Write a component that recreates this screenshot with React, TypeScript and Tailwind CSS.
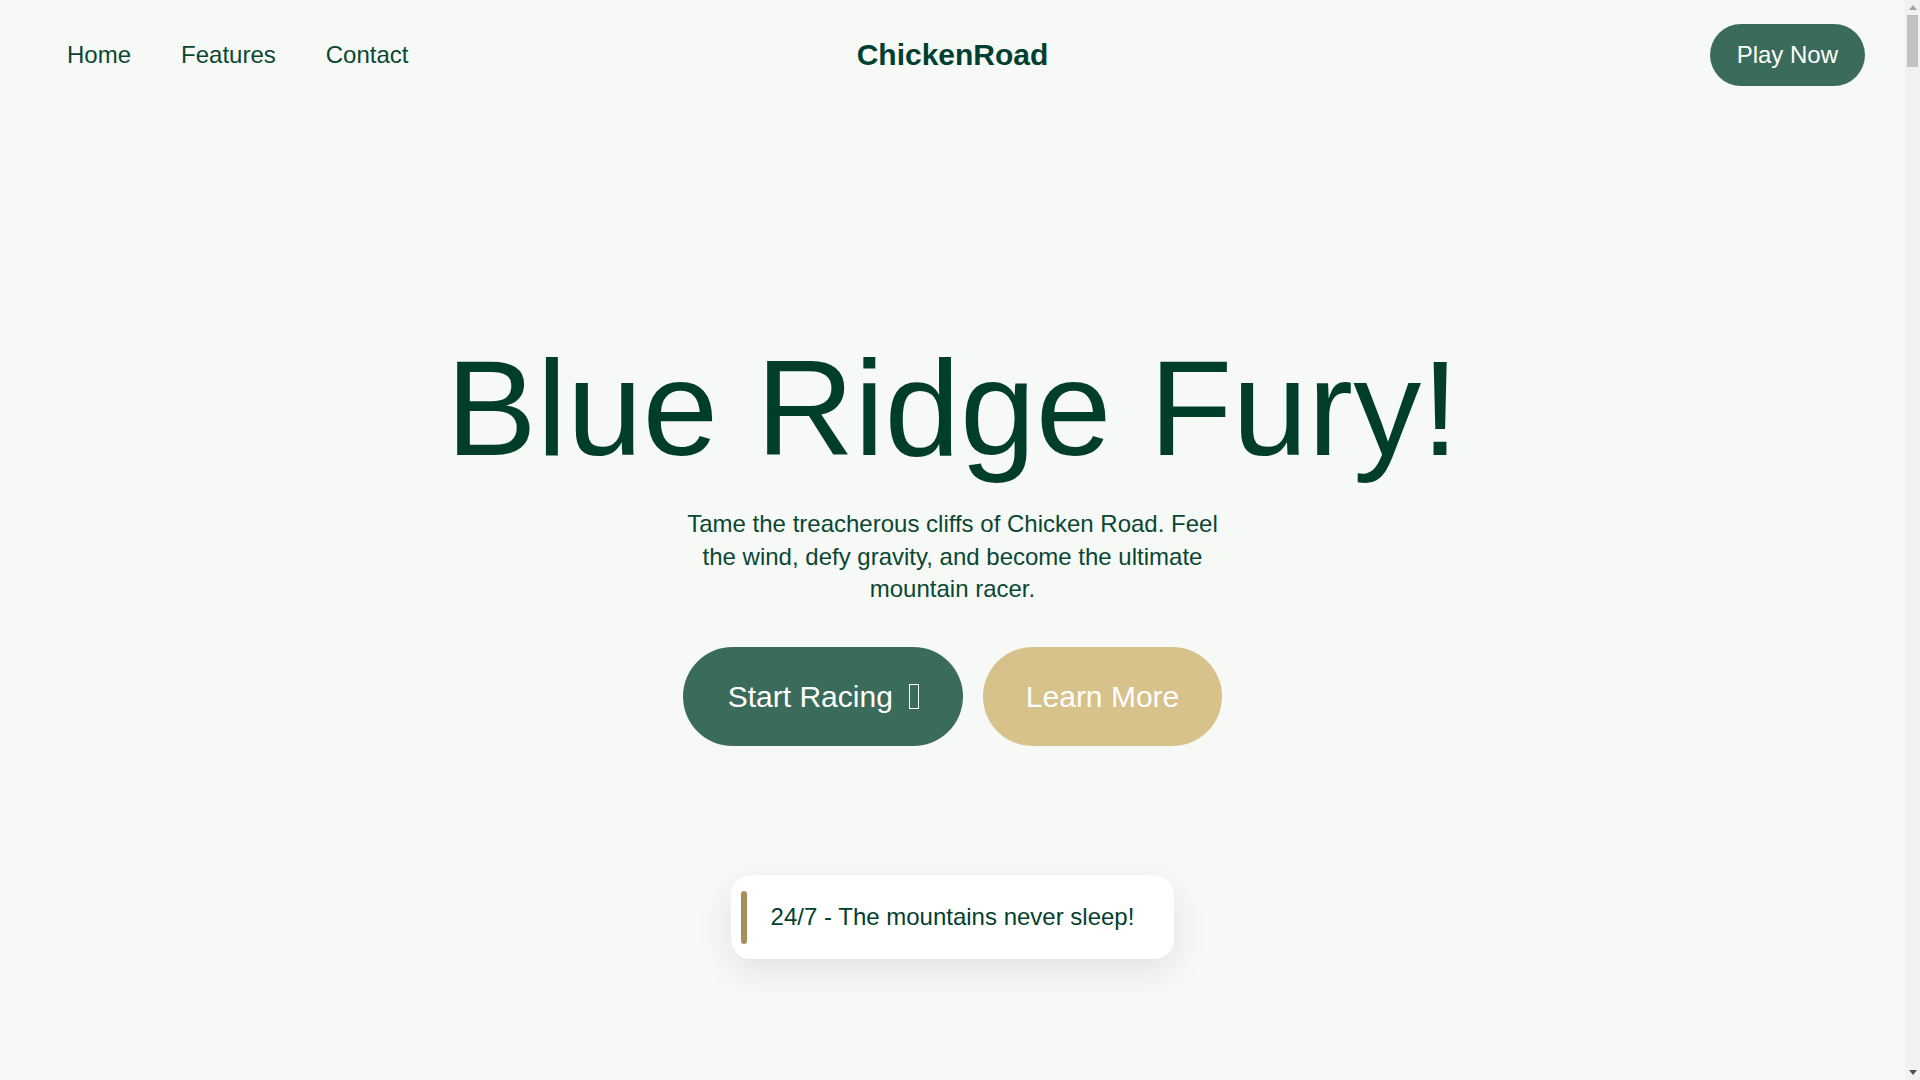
import React from "react"

const navLinks = ["Home", "Features", "Contact"]

function Header() {
    return (
        <header className="grid grid-cols-[1fr_auto_1fr] items-center h-[110px] px-[40px]">
            <nav className="flex items-center gap-[50px] ml-[27px]">
                {navLinks.map((l) => (
                    <a key={l} href="#" className="text-[24px] leading-[28px] text-[#0a4733]">
                        {l}
                    </a>
                ))}
            </nav>
            <div className="text-[30px] font-bold text-[#004030] leading-none">ChickenRoad</div>
            <div className="flex justify-end">
                <button className="h-[62px] px-[27px] rounded-full bg-[#3b6b5a] text-white text-[24px] leading-none">
                    Play Now
                </button>
            </div>
        </header>
    )
}

function Hero() {
    return (
        <section className="flex flex-col items-center text-center pt-[217px] pb-[120px]">
            <h1 className="text-[136px] leading-[1.2] text-[#003d2b] font-normal">Blue Ridge Fury!</h1>
            <p className="mt-[18px] max-w-[550px] text-[24px] leading-[32.5px] text-[#0a4733]">
                Tame the treacherous cliffs of Chicken Road. Feel the wind, defy gravity, and become the ultimate mountain racer.
            </p>

            {/* CTA buttons */}
            <div className="flex items-center gap-[20px] mt-[41px]">
                <button className="h-[99px] pl-[45px] pr-[44px] rounded-full bg-[#3b6b5a] text-white flex items-center text-[30px]">
                    <span>Start Racing</span>
                    {/* missing icon-font glyph renders as an empty box */}
                    <span className="inline-block w-[10px] h-[25px] border-[1.5px] border-white ml-[16px] mt-[1px]" />
                </button>
                <button className="h-[99px] px-[43px] rounded-full bg-[#d6c28a] text-white text-[30px]">
                    Learn More
                </button>
            </div>

            {/* Availability card */}
            <div className="relative mt-[129px] h-[84px] px-[40px] flex items-center bg-white rounded-[20px] shadow-[0_12px_36px_rgba(0,0,0,0.09)]">
                <span className="absolute left-[10px] top-[16px] bottom-[15px] w-[6px] rounded-full bg-[#a68f5b]" />
                <span className="text-[24px] text-[#033f2e]">24/7 - The mountains never sleep!</span>
            </div>
        </section>
    )
}

const features = [
    { title: "Cliffside Tracks", text: "Race along narrow ridges where one wrong step sends you tumbling." },
    { title: "Wind Boosts", text: "Catch the mountain gusts and soar over the gaps in the road." },
    { title: "Daily Climbs", text: "New routes every day to test your nerve and timing." },
]

function Scrollbar() {
    return (
        <aside className="sticky top-0 h-screen w-[15px] shrink-0 bg-[#f1f1f1] flex flex-col">
            <div className="h-[15px] flex items-center justify-center">
                <svg width="8" height="5" viewBox="0 0 8 5"><path d="M4 0L8 5H0Z" fill="#a3a3a3" /></svg>
            </div>
            <div className="mx-[2px] h-[52px] bg-[#c1c1c1]" />
            <div className="flex-1" />
            <div className="h-[15px] flex items-center justify-center">
                <svg width="8" height="5" viewBox="0 0 8 5"><path d="M0 0H8L4 5Z" fill="#505050" /></svg>
            </div>
        </aside>
    )
}

export default function App() {
    return (
        <div className="flex bg-[#f7f9f7] font-['Liberation_Sans',Arial,sans-serif] text-[#003d2b]">
            <main className="flex-1 min-w-0">
                <Header />
                <Hero />

                {/* Below the fold */}
                <section id="features" className="px-[40px] py-[120px] min-h-[10000px]">
                    <h2 className="text-[48px] text-center mb-[60px]">Features</h2>
                    <div className="grid grid-cols-3 gap-[32px] max-w-[1200px] mx-auto">
                        {features.map((f) => (
                            <div key={f.title} className="bg-white rounded-[20px] p-[32px] shadow-[0_12px_36px_rgba(0,0,0,0.08)]">
                                <h3 className="text-[26px] font-bold mb-[12px]">{f.title}</h3>
                                <p className="text-[18px] leading-[1.5] text-[#0a4733]">{f.text}</p>
                            </div>
                        ))}
                    </div>
                </section>
                <section id="contact" className="px-[40px] py-[120px] min-h-[10000px] text-center">
                    <h2 className="text-[48px] mb-[24px]">Contact</h2>
                    <p className="text-[20px] text-[#0a4733]">Questions about the road? Drop us a line any time.</p>
                </section>
            </main>
            <Scrollbar />
        </div>
    )
}
